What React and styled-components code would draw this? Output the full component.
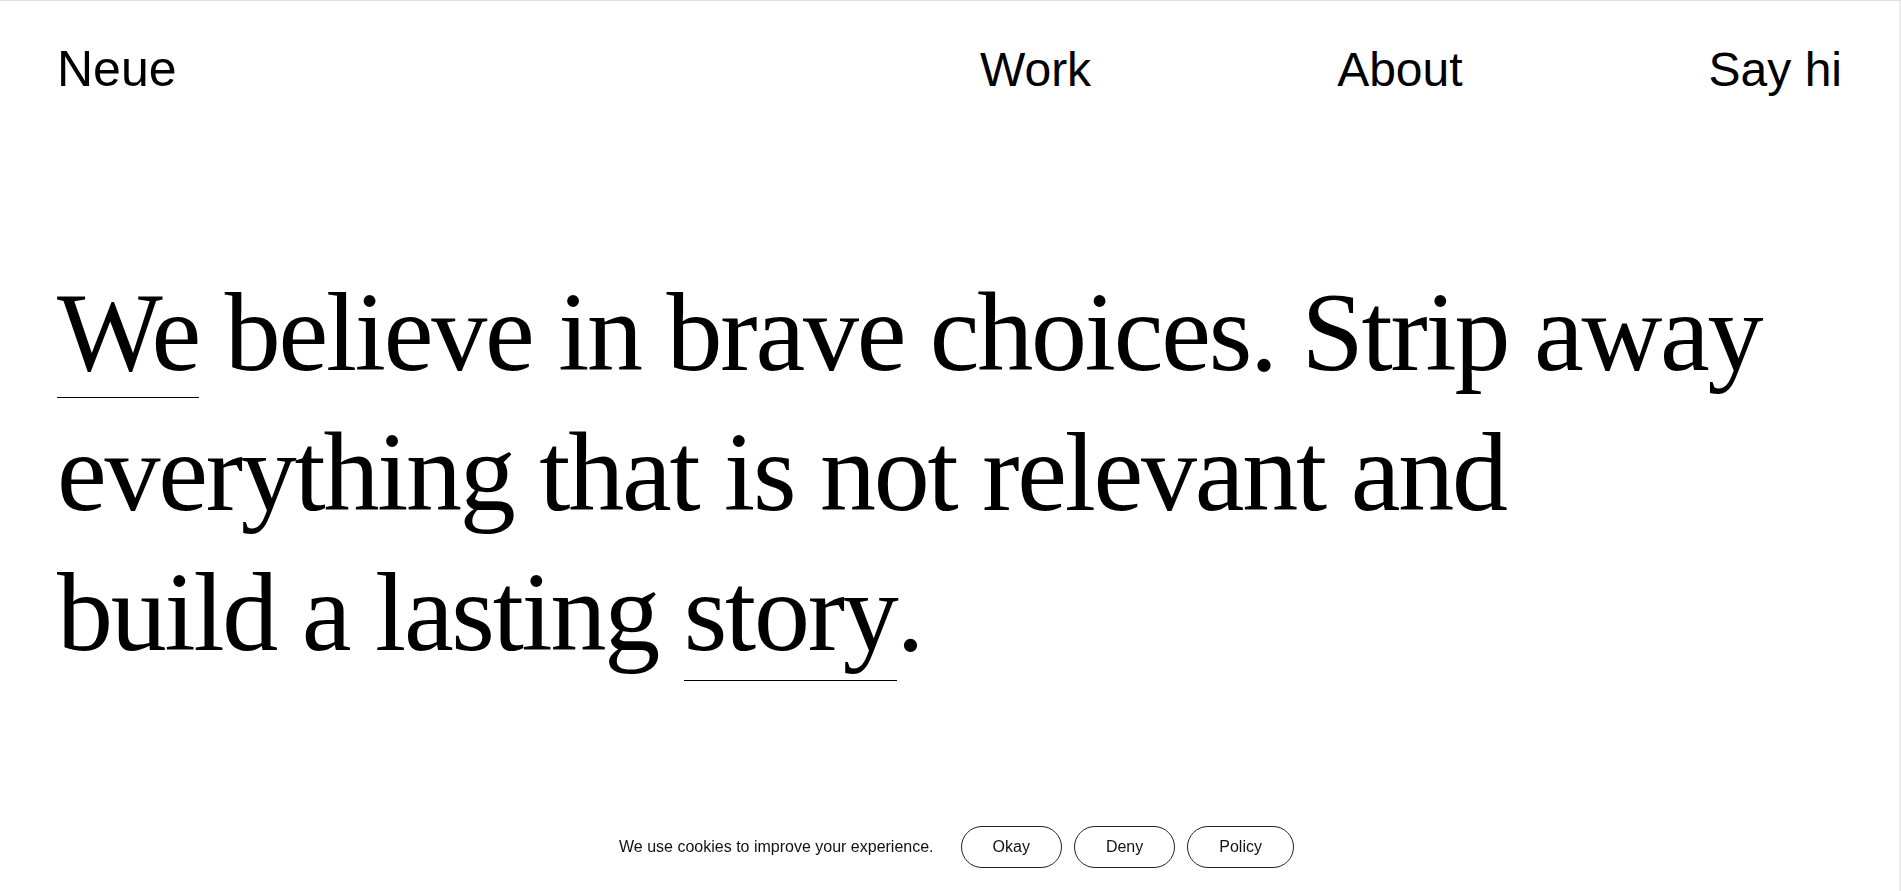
import React from "react";
import styled, { createGlobalStyle } from "styled-components";

const Global = createGlobalStyle`
  html, body {
    margin: 0;
    padding: 0;
    background: #ffffff;
  }
  body {
    font-family: "Liberation Sans", Arial, sans-serif;
    color: #000;
  }
  * { box-sizing: border-box; }
`;

const Page = styled.div`
  min-height: 891px;
  border-top: 1px solid #dcdcdc;
  border-right: 2px solid #ececec;
  padding: 0 57px 0 57px;
`;

const Header = styled.header`
  display: grid;
  grid-template-columns: 1fr 1fr;
  column-gap: 61px;
  align-items: baseline;
  padding-top: 40px;
`;

const Logo = styled.a`
  font-family: "Liberation Sans", Arial, sans-serif;
  font-size: 50px;
  line-height: 1.15;
  color: #000;
  text-decoration: none;
`;

const Nav = styled.nav`
  display: flex;
  justify-content: space-between;
  align-items: baseline;
`;

const NavLink = styled.a`
  font-family: "Liberation Sans", Arial, sans-serif;
  font-size: 48px;
  line-height: 1.15;
  color: #000;
  text-decoration: none;
`;

const Hero = styled.h1`
  margin: 163px 0 0;
  font-family: "Liberation Serif", "Times New Roman", serif;
  font-weight: 400;
  font-size: 112px;
  line-height: 140px;
  letter-spacing: -0.02em;
  white-space: nowrap;
  color: #000;
`;

const Marked = styled.span`
  position: relative;
  &::after {
    content: "";
    position: absolute;
    left: 0;
    right: 0;
    bottom: ${(p) => p.$drop || "-4px"};
    height: 1px;
    background: #000;
  }
`;

const Cookie = styled.div`
  position: fixed;
  left: 0;
  right: 0;
  bottom: 23px;
  display: flex;
  justify-content: center;
  align-items: center;
  gap: 12px;
  padding-left: 12px;
`;

const CookieText = styled.p`
  margin: 0 15px 0 0;
  font-family: "Liberation Sans", Arial, sans-serif;
  font-size: 16px;
  color: #111;
`;

const Pill = styled.button`
  height: 42px;
  padding: 0 31px;
  border: 1px solid #222;
  border-radius: 21px;
  background: #fff;
  font-family: "Liberation Sans", Arial, sans-serif;
  font-size: 16px;
  color: #111;
  cursor: pointer;
`;

export default function App() {
  return (
    <>
      <Global />
      <Page>
        <Header>
          <Logo href="#">Neue</Logo>
          <Nav>
            <NavLink href="#">Work</NavLink>
            <NavLink href="#">About</NavLink>
            <NavLink href="#">Say hi</NavLink>
          </Nav>
        </Header>
        <Hero>
          <Marked>We</Marked> believe in brave choices. Strip away
          <br />
          everything that is not relevant and
          <br />
          build a lasting <Marked $drop="-7px">story</Marked>.
        </Hero>
      </Page>
      <Cookie>
        <CookieText>We use cookies to improve your experience.</CookieText>
        <Pill>Okay</Pill>
        <Pill>Deny</Pill>
        <Pill>Policy</Pill>
      </Cookie>
    </>
  );
}
